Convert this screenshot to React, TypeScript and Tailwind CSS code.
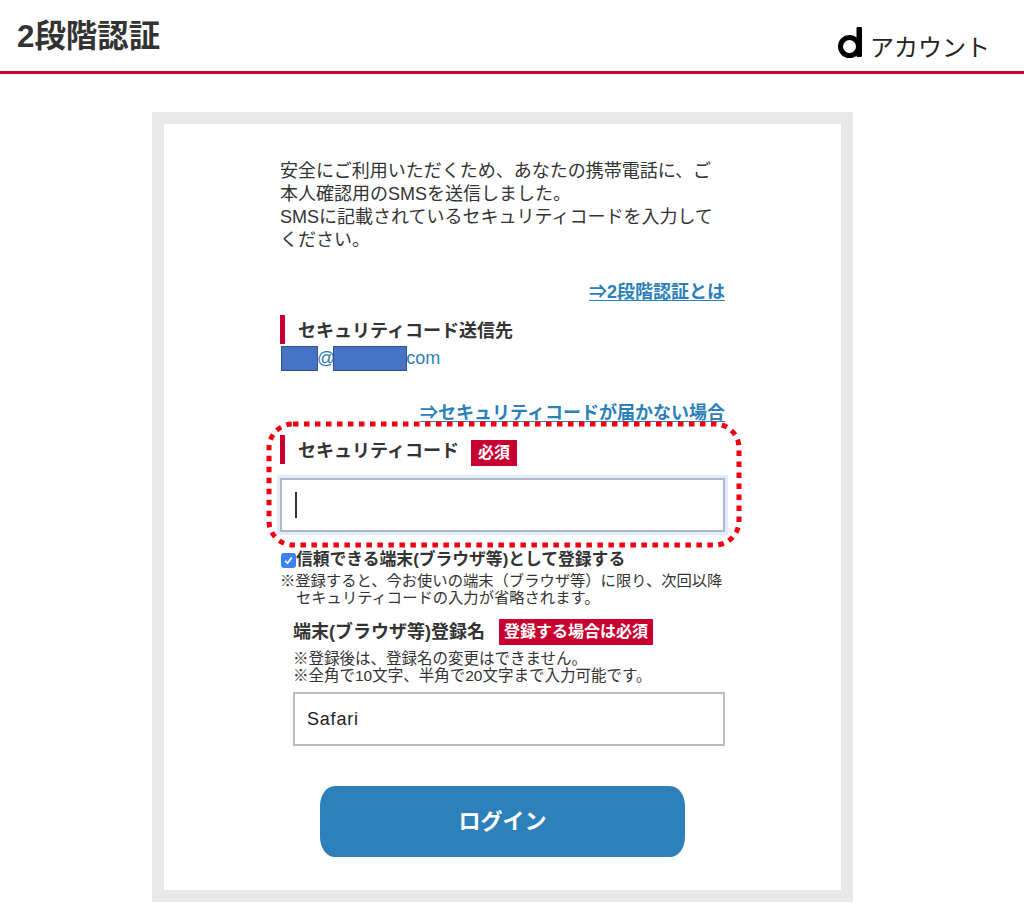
import React from 'react';

const FONT = 'font-["Liberation_Sans","Noto_Sans_CJK_JP",sans-serif]';

// 赤いバー付きの見出し
const SectionHeading: React.FC<{ children: React.ReactNode }> = ({ children }) => (
  <div className="flex h-[29px] items-center border-l-[5px] border-[#c7002f] pt-[4px] pl-[13px] text-[18px] font-bold text-[#333]">
    {children}
  </div>
);

const Badge: React.FC<{ children: React.ReactNode; className?: string }> = ({ children, className }) => (
  <span className={`flex h-[26px] items-center bg-[#c7002f] text-[16px] font-bold text-white ${className}`}>
    {children}
  </span>
);

const LinkRow: React.FC<{ children: React.ReactNode; className?: string }> = ({ children, className }) => (
  <div className={`text-right text-[18px] leading-[23px] font-bold ${className}`}>
    <a href="#" className="text-[#2b80b9] underline underline-offset-2">
      {children}
    </a>
  </div>
);

export default function App() {
  return (
    <div className={`min-h-[919px] bg-white ${FONT}`}>
      <header className="flex h-[74px] items-start justify-between border-b-[3px] border-[#c7002f] pr-[34px] pl-[17px]">
        <h1 className="mt-[18px] text-[31.4px] leading-[38px] font-bold text-[#333]">2段階認証</h1>
        <div className="mt-[27px] flex items-start gap-[8px]">
          <svg width="24" height="31" viewBox="0 0 24 31" className="text-black">
            <circle cx="11.5" cy="19.5" r="9" fill="none" stroke="currentColor" strokeWidth="5" />
            <rect x="18.5" y="0" width="5.5" height="30" rx="1" fill="currentColor" />
          </svg>
          <span className="mt-[6px] text-[24px] leading-[30px] font-normal text-[#222]">アカウント</span>
        </div>
      </header>

      <main className="mt-[38px] ml-[152px] w-[701px] border-[12px] border-[#e8e8e8] bg-white px-[116px] pt-[36px] pb-[33px]">
        <p className="text-[18px] leading-[23px] text-[#333]">
          安全にご利用いただくため、あなたの携帯電話に、ご
          <br />
          本人確認用のSMSを送信しました。
          <br />
          SMSに記載されているセキュリティコードを入力して
          <br />
          ください。
        </p>

        <LinkRow className="mt-[29px]">⇒2段階認証とは</LinkRow>

        <div className="mt-[11px]">
          <SectionHeading>セキュリティコード送信先</SectionHeading>
        </div>
        <div className="relative mt-[2px] h-[24px] text-[18px] leading-[24px] font-medium text-[#2b80b9]">
          <span className="pl-[37px]">@p</span>
          <span className="pl-[61px]">com</span>
          {/* 塗りつぶされたメールアドレス */}
          <span className="absolute top-0 left-px h-[25px] w-[37px] border border-[#2f528f] bg-[#4472c4]" />
          <span className="absolute top-0 left-[53px] h-[25px] w-[74px] border border-[#2f528f] bg-[#4472c4]" />
        </div>

        <LinkRow className="mt-[32px]">⇒セキュリティコードが届かない場合</LinkRow>

        <div className="relative mt-[10px]">
          <div className="flex h-[29px] items-start gap-[12px]">
            <SectionHeading>セキュリティコード</SectionHeading>
            <Badge className="mt-[5px] px-[7px]">必須</Badge>
          </div>
          <div className="mt-[14px] flex h-[54px] items-center border-2 border-[#b4b8c4] bg-white pl-[13px] shadow-[0_0_0_3px_#e2ebfa]">
            <span className="h-[26px] w-[2px] bg-[#333]" />
          </div>
          {/* 赤い点線の注釈 */}
          <svg
            width="476"
            height="127"
            viewBox="0 0 476 127"
            className="pointer-events-none absolute top-[-14px] left-[-14px]"
          >
            <rect
              x="3"
              y="3"
              width="470"
              height="121"
              rx="24"
              fill="none"
              stroke="#f00010"
              strokeWidth="5"
              strokeDasharray="5.5 5.5"
            />
          </svg>
        </div>

        <label className="mt-[18px] flex h-[20px] items-center text-[16.8px] font-bold text-[#333]">
          <span className="ml-px flex h-[15px] w-[15px] shrink-0 items-center justify-center rounded-[3px] bg-[#3b82f6]">
            <svg width="11" height="11" viewBox="0 0 11 11">
              <path d="M2.2 5.8 L4.5 8.2 L8.8 2.6" fill="none" stroke="white" strokeWidth="1.7" />
            </svg>
          </span>
          信頼できる端末(ブラウザ等)として登録する
        </label>

        <p className="mt-[2px] pl-[16px] -indent-[16px] text-[15.3px] leading-[17px] text-[#333]">
          ※登録すると、今お使いの端末（ブラウザ等）に限り、次回以降 セキュリティコードの入力が省略されます。
        </p>

        <div className="pl-[13px]">
          <div className="mt-[13px] flex h-[26px] items-center gap-[14px]">
            <span className="text-[18px] font-bold text-[#333]">端末(ブラウザ等)登録名</span>
            <Badge className="px-[5px]">登録する場合は必須</Badge>
          </div>
          <p className="mt-[5px] text-[15.5px] leading-[17px] text-[#333]">
            ※登録後は、登録名の変更はできません。
            <br />
            ※全角で10文字、半角で20文字まで入力可能です。
          </p>
          <input
            readOnly
            value="Safari"
            className="mt-[8px] block h-[54px] w-full border-2 border-[#bcbcbc] bg-white pl-[12px] text-[18px] tracking-[0.8px] text-[#222] outline-none"
          />
        </div>

        <button className="mx-auto mt-[40px] block h-[71px] w-[365px] rounded-[15px/20px] bg-[#2d80ba] text-[22px] font-bold text-white">
          ログイン
        </button>
      </main>
    </div>
  );
}
